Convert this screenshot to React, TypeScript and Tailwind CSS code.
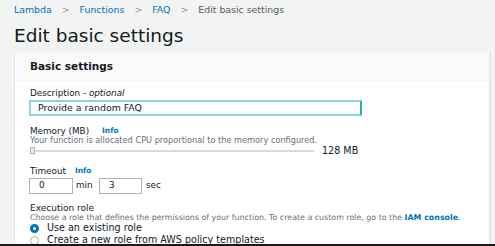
import React from 'react';

const App: React.FC = () => {
  return (
    <div
      className="w-[495px] h-[246px] overflow-hidden bg-[#f2f3f3] text-[#16191f] relative"
      style={{ fontFamily: '"DejaVu Sans", Verdana, sans-serif' }}
    >
      {/* breadcrumb */}
      <div className="flex items-center h-[20px] pl-[14px] text-[9.4px]">
        <span className="text-[#0073bb]">Lambda</span>
        <span className="text-[#879596] mx-[10px]">&gt;</span>
        <span className="text-[#0073bb]">Functions</span>
        <span className="text-[#879596] mx-[10px]">&gt;</span>
        <span className="text-[#0073bb]">FAQ</span>
        <span className="text-[#879596] mx-[10px]">&gt;</span>
        <span className="text-[#545b64]">Edit basic settings</span>
      </div>

      <h1 className="pl-[14px] h-[32px] flex items-center text-[18.5px] leading-none">Edit basic settings</h1>

      {/* card */}
      <div className="ml-[14px] w-[477px] bg-white border-l border-[#e4e6e6] border-r-2 border-r-[#e6e8e8]">
        <div className="h-[30px] bg-[#fafafa] flex items-center pl-[15px] font-bold text-[10.5px]">Basic settings</div>

        <div className="pl-[14px] pt-[6px]">
          <div className="text-[8.8px] leading-[11px] pl-[1px]">
            Description - <span className="italic">optional</span>
          </div>
          <div className="mt-[1px] w-[333px] h-[16px] border-2 border-[#8fd3e3] border-r-[#2aa9cc] flex items-center pl-[7px] text-[9.4px]">
            Provide a random FAQ
          </div>

          <div className="mt-[10px] text-[8.8px] leading-[10px] pl-[1px] flex items-center">
            Memory (MB)
            <span className="ml-[13px] text-[#0073bb] font-bold text-[7.5px]">Info</span>
          </div>
          <div className="text-[8.2px] leading-[9px] text-[#687078] pl-[1px]">
            Your function is allocated CPU proportional to the memory configured.
          </div>
          <div className="flex items-center h-[12px] pl-[1px]">
            <div className="relative w-[284px] h-[2px] bg-[#d5dbdb]">
              <div className="absolute left-0 top-[-3px] w-[5px] h-[7px] border border-[#aab7b8] bg-[#eaeded]" />
            </div>
            <span className="ml-[8px] text-[9.6px]">128 MB</span>
          </div>

          <div className="mt-[9px] text-[8.8px] leading-[10px] pl-[1px] flex items-center">
            Timeout
            <span className="ml-[9px] text-[#0073bb] font-bold text-[7.5px]">Info</span>
          </div>
          <div className="mt-[2px] flex items-center text-[8.8px]">
            <div className="w-[44px] h-[16px] border border-[#aab7b8] flex items-center pl-[9px]">0</div>
            <span className="ml-[3px] w-[23px]">min</span>
            <div className="w-[43px] h-[16px] border border-[#aab7b8] flex items-center pl-[9px]">3</div>
            <span className="ml-[4px]">sec</span>
          </div>

          <div className="mt-[9px] text-[9px] leading-[10px] pl-[1px]">Execution role</div>
          <div className="text-[7.9px] leading-[9px] text-[#687078] pl-[1px] whitespace-nowrap">
            Choose a role that defines the permissions of your function. To create a custom role, go to the{' '}
            <span className="text-[#0073bb] font-bold">IAM console</span>.
          </div>
          <div className="flex items-center h-[12px] text-[9.6px]">
            <span className="ml-[1px] w-[9px] h-[9px] rounded-full border-[3px] border-[#0073bb] bg-white" />
            <span className="ml-[8px]">Use an existing role</span>
          </div>
          <div className="flex items-center h-[13px] text-[9.6px]">
            <span className="ml-[1px] w-[9px] h-[9px] rounded-full border border-[#aab7b8] bg-white" />
            <span className="ml-[8px]">Create a new role from AWS policy templates</span>
          </div>
        </div>
      </div>

      <div className="absolute left-0 bottom-0 w-full h-[2px] bg-[#1a1a1a]" />
    </div>
  );
};

export default App;
